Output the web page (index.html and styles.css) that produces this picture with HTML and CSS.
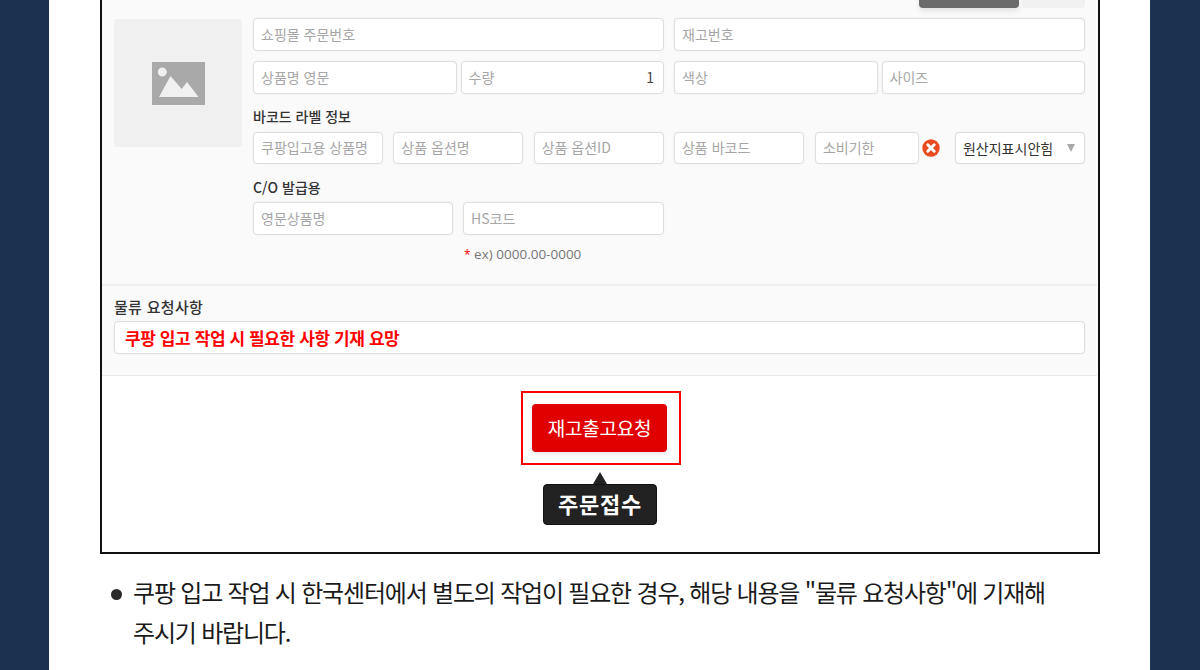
FILE: index.html
```html
<!DOCTYPE html>
<html lang="ko">
<head>
<meta charset="utf-8">
<title>재고출고요청</title>
<link rel="stylesheet" href="styles.css">
</head>
<body>
<main class="page">
  <section class="frame">
    <div class="form">
      <div class="tabs">
        <span class="tab tab-dark"></span>
        <span class="tab tab-light"></span>
      </div>
      <div class="product">
        <div class="photo">
          <svg class="photo-icon" width="53" height="43" viewBox="0 0 53 43">
            <path fill="#a9a9a9" fill-rule="evenodd" d="M0 0H53V43H0ZM10.300 5.500A4.500 4.500 0 1 0 10.300 14.500A4.500 4.500 0 1 0 10.300 5.500ZM7 35H46.500L35 20L29.700 27L18.500 14Z"/>
          </svg>
        </div>
        <div class="fields">
          <div class="row row-main">
            <div class="field grow">쇼핑몰 주문번호</div>
            <div class="field grow">재고번호</div>
          </div>
          <div class="row row-main">
            <div class="pair">
              <div class="field grow">상품명 영문</div>
              <div class="field grow qty"><span>수량</span><span class="qty-value">1</span></div>
            </div>
            <div class="pair">
              <div class="field grow">색상</div>
              <div class="field grow">사이즈</div>
            </div>
          </div>
          <h3 class="label label-barcode">바코드 라벨 정보</h3>
          <div class="row row-barcode">
            <div class="field short w130">쿠팡입고용 상품명</div>
            <div class="field short w130">상품 옵션명</div>
            <div class="field short w130">상품 옵션ID</div>
            <div class="field short w130 after-gap">상품 바코드</div>
            <div class="field short w104">소비기한</div>
            <svg class="clear" width="18" height="18" viewBox="0 0 18 18">
              <circle cx="9" cy="9" r="8.700" fill="#ea4a20"/>
              <path d="M5.800 5.800L12.200 12.200M12.200 5.800L5.800 12.200" stroke="#fff" stroke-width="3" stroke-linecap="round"/>
            </svg>
            <div class="field short select"><span>원산지표시안힘</span><i class="caret"></i></div>
          </div>
          <h3 class="label label-co">C/O 발급용</h3>
          <div class="row row-co">
            <div class="field w200">영문상품명</div>
            <div class="field w201">HS코드</div>
          </div>
          <p class="note"><span class="star">*</span> ex) 0000.00-0000</p>
        </div>
      </div>
      <div class="request">
        <h3 class="label label-request">물류 요청사항</h3>
        <div class="field request-input">쿠팡 입고 작업 시 필요한 사항 기재 요망</div>
      </div>
    </div>
    <div class="actions">
      <div class="highlight">
        <button class="submit" type="button">재고출고요청</button>
      </div>
      <div class="tooltip">주문접수</div>
    </div>
  </section>
  <ul class="notes">
    <li>쿠팡 입고 작업 시 한국센터에서 별도의 작업이 필요한 경우, 해당 내용을 "물류 요청사항"에 기재해<br>주시기 바랍니다.</li>
  </ul>
</main>
</body>
</html>
```
FILE: styles.css
```css
* { box-sizing: border-box; }
html, body { margin: 0; padding: 0; height: 670px; overflow: hidden; }
body {
  background: #1c3050;
  font-family: "Noto Sans CJK KR", "Noto Sans", sans-serif;
  color: #222;
}
.page {
  width: 1101px;
  height: 670px;
  margin-left: 49px;
  padding: 0 50px 0 51px;
  background: #fff;
  overflow: hidden;
}
.frame {
  height: 554px;
  border: 2px solid #111;
  border-top: 0;
  display: flex;
  flex-direction: column;
}
.form {
  height: 376px;
  background: #fafafa;
  border-bottom: 1px solid #e9e9e9;
  margin-right: 1px;
}
.tabs {
  height: 8px;
  display: flex;
  justify-content: flex-end;
  gap: 3px;
  padding-right: 12px;
}
.tab { display: block; height: 8px; border-radius: 0 0 4px 4px; }
.tab-dark { width: 100px; background: #6b6b6b; box-shadow: 0 2px 6px rgba(0,0,0,.12); }
.tab-light { width: 63px; background: #f1f1f1; }
.product {
  height: 278px;
  display: flex;
  align-items: flex-start;
  padding: 10px 12px 0;
  border-bottom: 2px solid #eee;
}
.photo {
  flex: none;
  width: 128px;
  height: 128px;
  margin: 1px 11px 0 0;
  background: #f0f0f0;
  border-radius: 4px;
  display: flex;
  align-items: center;
  justify-content: center;
}
.fields { flex: 1; min-width: 0; }
.row { display: flex; }
.row-main { gap: 10px; height: 33px; margin-bottom: 10px; }
.pair { flex: 1; display: flex; gap: 4px; min-width: 0; }
.field {
  height: 33px;
  padding: 0 7px;
  background: #fff;
  border: 1px solid #dedede;
  border-radius: 4px;
  box-shadow: 0 0 2px rgba(0,0,0,.05);
  font-size: 14px;
  line-height: 30px;
  color: #a6a6a6;
  white-space: nowrap;
  overflow: hidden;
}
.grow { flex: 1 1 0; min-width: 0; }
.qty { display: flex; justify-content: space-between; }
.qty-value { color: #444; padding-right: 2px; }
.label {
  margin: 0;
  font-size: 14px;
  font-weight: 500;
  line-height: 20px;
  color: #333;
}
.label-barcode { margin: 12px 0 6px; }
.row-barcode { height: 32px; align-items: center; }
.short { height: 32px; line-height: 29px; flex: none; }
.w130 { width: 130px; margin-right: 10.340px; }
.after-gap { margin-right: 11px; }
.w104 { width: 104px; }
.clear { flex: none; margin: 0 15px 0 3px; }
.select {
  width: 130px;
  display: flex;
  justify-content: space-between;
  align-items: center;
  color: #333;
  padding-right: 9px;
}
.caret {
  width: 0;
  height: 0;
  border-left: 4.500px solid transparent;
  border-right: 4.500px solid transparent;
  border-top: 8px solid #a9a9a9;
}
.label-co { margin: 13px 0 5px; }
.row-co { gap: 10px; }
.w200 { width: 200px; flex: none; }
.w201 { width: 201px; flex: none; }
.note {
  margin: 9px 0 0 211px;
  font-family: "Open Sans", "Noto Sans CJK KR", sans-serif;
  font-size: 13.500px;
  line-height: 20px;
  color: #777;
}
.star { color: #f00; font-size: 12px; }
.request { padding: 11px 12px 0; }
.label-request { font-size: 15px; letter-spacing: .3px; }
.request-input {
  margin-top: 4px;
  padding: 0 10px;
  font-size: 17px;
  font-weight: 700;
  letter-spacing: -.4px;
  line-height: 31px;
  color: #f00;
}
.actions {
  flex: 1;
  display: flex;
  flex-direction: column;
  align-items: center;
  padding-top: 15px;
}
.highlight {
  width: 160px;
  height: 74px;
  margin-left: 2px;
  padding-left: 9px;
  border: 2px solid #f00;
  display: flex;
  align-items: center;
}
.submit {
  width: 135px;
  height: 48px;
  border: 0;
  padding: 0;
  border-radius: 4px;
  background: #e00000;
  box-shadow: 0 2px 6px rgba(0,0,0,.1);
  color: #fff;
  font: 400 19px/46px "Noto Sans CJK KR", sans-serif;
  letter-spacing: -.2px;
}
.tooltip {
  position: relative;
  margin-top: 19px;
  width: 114px;
  height: 41px;
  background: #222;
  border: 1px solid #111;
  border-radius: 4px;
  color: #fff;
  font-size: 22px;
  font-weight: 700;
  letter-spacing: .8px;
  line-height: 37px;
  text-align: center;
}
.tooltip::before {
  content: "";
  position: absolute;
  left: 50%;
  top: -13px;
  margin-left: -7px;
  border-left: 7px solid transparent;
  border-right: 7px solid transparent;
  border-bottom: 12px solid #222;
}
.notes {
  margin: 18px 0 0;
  padding: 0 0 0 33px;
  list-style: none;
}
.notes li {
  position: relative;
  font-size: 24px;
  line-height: 40px;
  letter-spacing: -1.2px;
  color: #1a1a1a;
}
.notes li::before {
  content: "";
  position: absolute;
  left: -22px;
  top: 17px;
  width: 11px;
  height: 11px;
  border-radius: 50%;
  background: #2a2a2a;
}
```
